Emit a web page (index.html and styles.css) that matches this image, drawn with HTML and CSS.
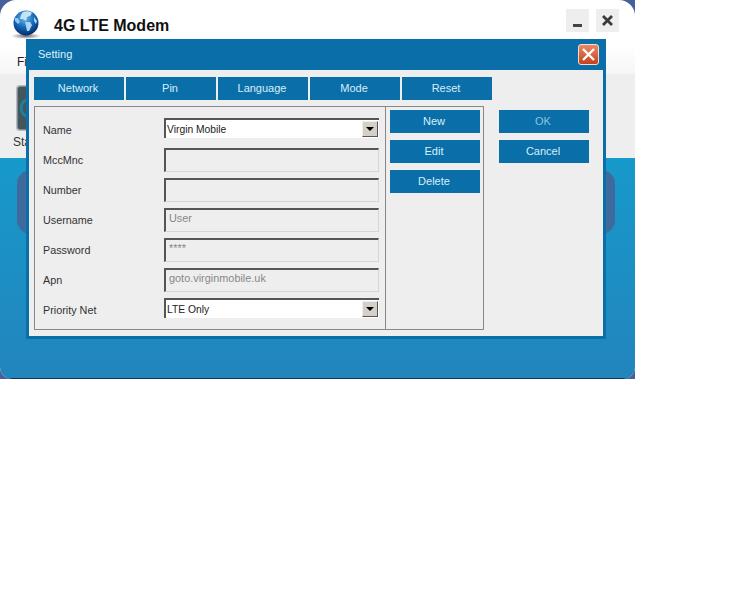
FILE: index.html
```html
<!DOCTYPE html>
<html lang="en">
<head>
    <meta charset="UTF-8">
    <meta name="viewport" content="width=device-width, initial-scale=1.0">
    <title>4G LTE Modem</title>
    <link rel="stylesheet" href="styles.css">
</head>
<body>
<div class="app-corners">
    <div class="app">
        <div class="app-header">
            <svg class="globe" width="30" height="30" viewBox="0 0 30 30">
                <defs>
                    <radialGradient id="globeFill" cx="45%" cy="30%" r="70%">
                        <stop offset="0" stop-color="#6dbdea"/>
                        <stop offset="0.55" stop-color="#1567b8"/>
                        <stop offset="1" stop-color="#07296a"/>
                    </radialGradient>
                    <radialGradient id="globeShadow">
                        <stop offset="0" stop-color="#333" stop-opacity="0.75"/>
                        <stop offset="1" stop-color="#333" stop-opacity="0"/>
                    </radialGradient>
                </defs>
                <ellipse cx="15" cy="27" rx="15" ry="3" fill="url(#globeShadow)"/>
                <circle cx="15" cy="14" r="12.5" fill="url(#globeFill)"/>
                <path d="M12 3c3-1 7-1 9 1l-2 3-3 1-1 4-3-2-3 0 1-4z" fill="#c4e4f6"/>
                <path d="M14 13l5 0 2 3-3 6-2 0-1-5z" fill="#a9d6f0"/>
                <path d="M4 9l3 0 2 4-2 2-3-3z" fill="#8fc8ea"/>
                <path d="M23 8l3 4-1 3-2-3z" fill="#a9d6f0"/>
            </svg>
            <h1 class="app-title">4G LTE Modem</h1>
            <div class="window-buttons">
                <button class="window-btn"><span class="minimize-bar"></span></button>
                <button class="window-btn">
                    <svg width="11" height="11" viewBox="0 0 11 11">
                        <path d="M1 1l9 9M10 1l-9 9" stroke="#3a3a3a" stroke-width="2.8" fill="none"/>
                    </svg>
                </button>
            </div>
        </div>
        <div class="menu-bar">File</div>
        <div class="toolbar">
            <div class="tool">
                <svg width="20" height="46" viewBox="0 0 20 46">
                    <rect x="0.5" y="0.5" width="19" height="45" rx="4" fill="#45555c" stroke="#b5bcc0" stroke-width="2"/>
                    <circle cx="14" cy="23" r="9" fill="none" stroke="#1d7f9c" stroke-width="3"/>
                    <circle cx="14" cy="23" r="4" fill="#16303c"/>
                </svg>
                <span class="tool-label">Status</span>
            </div>
        </div>
        <div class="main">
            <div class="main-panel"></div>
        </div>

        <div class="dialog">
            <div class="dialog-title">
                <span>Setting</span>
                <button class="dialog-close">
                    <svg width="15" height="15" viewBox="0 0 15 15">
                        <path d="M2 2l11 11M13 2L2 13" stroke="#fff" stroke-width="2.4" fill="none"/>
                    </svg>
                </button>
            </div>
            <div class="dialog-body">
                <div class="tabs">
                    <button class="blue-btn">Network</button>
                    <button class="blue-btn">Pin</button>
                    <button class="blue-btn">Language</button>
                    <button class="blue-btn">Mode</button>
                    <button class="blue-btn">Reset</button>
                </div>
                <div class="content">
                    <div class="group">
                        <div class="fields">
                            <div class="field-row">
                                <label>Name</label>
                                <div class="combo"><span>Virgin Mobile</span><span class="combo-arrow"></span></div>
                            </div>
                            <div class="field-row">
                                <label>MccMnc</label>
                                <input class="text-field" type="text" disabled>
                            </div>
                            <div class="field-row">
                                <label>Number</label>
                                <input class="text-field" type="text" disabled>
                            </div>
                            <div class="field-row">
                                <label>Username</label>
                                <input class="text-field" type="text" value="User" disabled>
                            </div>
                            <div class="field-row">
                                <label>Password</label>
                                <input class="text-field" type="text" value="****" disabled>
                            </div>
                            <div class="field-row">
                                <label>Apn</label>
                                <input class="text-field" type="text" value="goto.virginmobile.uk" disabled>
                            </div>
                            <div class="field-row">
                                <label>Priority Net</label>
                                <div class="combo"><span>LTE Only</span><span class="combo-arrow"></span></div>
                            </div>
                        </div>
                        <div class="group-actions">
                            <button class="blue-btn">New</button>
                            <button class="blue-btn">Edit</button>
                            <button class="blue-btn">Delete</button>
                        </div>
                    </div>
                    <div class="side-actions">
                        <button class="blue-btn disabled">OK</button>
                        <button class="blue-btn">Cancel</button>
                    </div>
                </div>
            </div>
        </div>
    </div>
</div>
</body>
</html>
```

FILE: styles.css
```css
:root {
    --accent: #0a6ea8;
}

body {
    margin: 0;
    background-color: #fff;
    font-family: "Liberation Sans", Arial, sans-serif;
    font-size: 11px;
    color: #333;
}

button {
    font-family: inherit;
    font-size: inherit;
}

/* dark corners that show behind the rounded window */
.app-corners {
    width: 635px;
    height: 379px;
    background-color: #46609a;
}

.app {
    position: relative;
    height: 379px;
    overflow: hidden;
    border-radius: 16px 16px 12px 12px;
    background-color: #fff;
}

.app-header {
    display: flex;
    align-items: flex-start;
    height: 46px;
    box-sizing: border-box;
    padding: 9px 16px 0 11px;
}

.globe {
    flex: none;
}

.app-title {
    margin: 7px 0 0 13px;
    font-size: 16px;
    line-height: 19px;
    font-weight: bold;
    color: #111;
}

.window-buttons {
    display: flex;
    gap: 7px;
    margin-left: auto;
}

.window-btn {
    display: flex;
    align-items: center;
    justify-content: center;
    width: 23px;
    height: 23px;
    padding: 0;
    border: none;
    background-color: #eee;
}

.minimize-bar {
    width: 9px;
    height: 3px;
    margin-top: 10px;
    background-color: #444;
}

.menu-bar {
    height: 28px;
    box-sizing: border-box;
    padding: 9px 0 0 17px;
    font-size: 12px;
    color: #222;
    background: linear-gradient(#fff, #f6f6f6);
}

.toolbar {
    height: 84px;
    box-sizing: border-box;
    padding: 11px 0 0 13px;
    background-color: #eee;
}

.tool {
    display: flex;
    flex-direction: column;
    align-items: flex-start;
}

.tool svg {
    margin-left: 3px;
}

.tool-label {
    margin-top: 4px;
    font-size: 12px;
}

.main {
    height: 221px;
    box-sizing: border-box;
    padding: 12px 20px 0 17px;
    border-bottom: 1px solid #0f3b57;
    background: linear-gradient(#1799cb, #2285bc);
}

.main-panel {
    height: 64px;
    border-radius: 14px;
    background-color: #3f6a9e;
}

/* settings dialog, sits over the main window */
.dialog {
    position: absolute;
    left: 26px;
    top: 39px;
    width: 580px;
    height: 300px;
    box-sizing: border-box;
    border: 3px solid var(--accent);
    border-top: none;
    background-color: #eee;
}

.dialog-title {
    display: flex;
    align-items: center;
    justify-content: space-between;
    height: 31px;
    margin: 0 -3px;
    padding: 0 7px 0 12px;
    background-color: var(--accent);
    color: #dff1fa;
}

.dialog-title span {
    margin-bottom: 2px;
}

.dialog-close {
    display: flex;
    align-items: center;
    justify-content: center;
    width: 21px;
    height: 21px;
    padding: 0;
    border: 1px solid #f3dcd2;
    border-radius: 3px;
    background: linear-gradient(#e98a66, #c8401c);
}

.dialog-body {
    padding: 7px 0 0 5px;
}

.tabs {
    display: flex;
    gap: 2px;
    margin-bottom: 6px;
}

.blue-btn {
    width: 90px;
    height: 23px;
    padding: 0 2px 2px 0;
    border: none;
    background-color: var(--accent);
    color: #d9eff9;
}

.blue-btn.disabled {
    color: #8cc3de;
}

.content {
    display: flex;
}

.group {
    display: flex;
    width: 450px;
    height: 224px;
    box-sizing: border-box;
    border: 1px solid #888;
}

.fields {
    display: flex;
    flex-direction: column;
    gap: 6px;
    width: 351px;
    box-sizing: border-box;
    padding: 11px 0 0 8px;
    border-right: 1px solid #888;
}

.field-row {
    display: grid;
    grid-template-columns: 121px 215px;
    align-items: start;
    height: 24px;
}

.field-row label {
    align-self: center;
    font-size: 10.8px;
}

.text-field {
    width: 215px;
    height: 24px;
    box-sizing: border-box;
    margin: 0;
    padding: 0 0 5px 3px;
    border-style: solid;
    border-width: 2px 1px 1px 2px;
    border-color: #555 #d6d6d6 #d6d6d6 #555;
    background-color: #eee;
    color: #888;
    font-family: inherit;
    font-size: 10.9px;
    opacity: 1;
}

.combo {
    display: flex;
    align-items: center;
    justify-content: space-between;
    width: 215px;
    height: 20px;
    box-sizing: border-box;
    padding: 0 1px 0 1px;
    border-style: solid;
    border-width: 2px 0 0 2px;
    border-color: #555;
    background-color: #fff;
    color: #222;
    font-size: 10.3px;
}

.combo-arrow {
    position: relative;
    width: 16px;
    height: 16px;
    box-sizing: border-box;
    border: 1px solid;
    border-color: #eee #555 #555 #eee;
    background-color: #d4d0c8;
}

.combo-arrow::after {
    content: "";
    position: absolute;
    left: 3px;
    top: 5px;
    border-style: solid;
    border-width: 4px 4px 0 4px;
    border-color: #000 transparent transparent transparent;
}

.group-actions {
    display: flex;
    flex-direction: column;
    gap: 7px;
    padding: 3px 0 0 4px;
}

.side-actions {
    display: flex;
    flex-direction: column;
    gap: 7px;
    margin-left: 15px;
    padding-top: 4px;
}
```
